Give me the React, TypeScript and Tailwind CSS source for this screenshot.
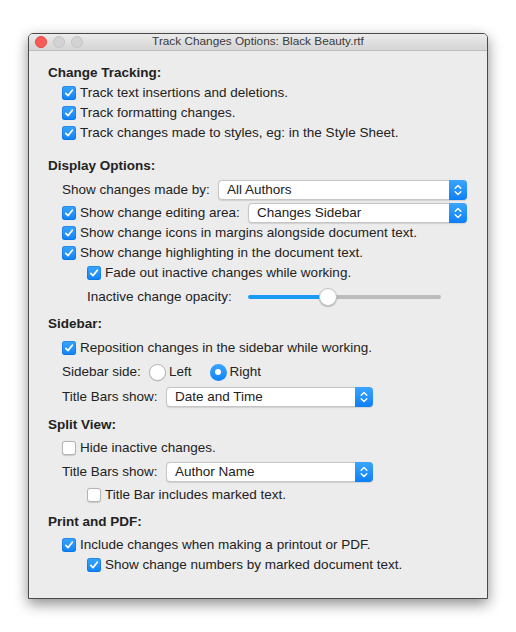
import React from "react";

const FONT = { fontFamily: '"Liberation Sans", Arial, sans-serif' };

function Check({ on }: { on: boolean }) {
  if (on) {
    return (
      <span className="flex h-[14px] w-[14px] shrink-0 items-center justify-center rounded-[3px] bg-gradient-to-b from-[#3aa5fb] to-[#0d82f8] shadow-[inset_0_0_0_1px_rgba(0,90,200,0.35)]">
        <svg width="10" height="10" viewBox="0 0 10 10">
          <path d="M1.8 5.3 L4 7.6 L8.3 2.2" fill="none" stroke="white" strokeWidth="1.7" strokeLinecap="round" strokeLinejoin="round" />
        </svg>
      </span>
    );
  }
  return <span className="h-[14px] w-[14px] shrink-0 rounded-[3px] border border-[#b4b4b4] bg-white shadow-[0_0.5px_1px_rgba(0,0,0,0.15)]" />;
}

function CheckRow({ on, text, indent = 0 }: { on: boolean; text: string; indent?: number }) {
  return (
    <div className={`flex h-[20px] items-center gap-[4px] ${indent ? "pl-[39px]" : "pl-[14px]"}`}>
      <Check on={on} />
      <span>{text}</span>
    </div>
  );
}

function Popup({ text, width }: { text: string; width: string }) {
  return (
    <div className={`flex h-[20px] items-stretch rounded-[4px] border border-[#c6c6c6] bg-white shadow-[0_0.5px_1px_rgba(0,0,0,0.12)] ${width}`}>
      <span className="flex flex-1 items-center pl-[8px]">{text}</span>
      <span className="-my-px -mr-px flex w-[18px] items-center justify-center rounded-r-[4px] bg-gradient-to-b from-[#3aa5fb] to-[#0a7ff6]">
        <svg width="8" height="12" viewBox="0 0 8 12">
          <path d="M1.2 4.3 L4 1.6 L6.8 4.3 M1.2 7.7 L4 10.4 L6.8 7.7" fill="none" stroke="white" strokeWidth="1.4" strokeLinecap="round" strokeLinejoin="round" />
        </svg>
      </span>
    </div>
  );
}

function Heading({ text, mt }: { text: string; mt: string }) {
  return <div className={`flex h-[20px] items-center font-bold ${mt}`}>{text}</div>;
}

function Radio({ on }: { on: boolean }) {
  if (on) {
    return (
      <span className="flex h-[17px] w-[17px] items-center justify-center rounded-full bg-gradient-to-b from-[#3aa5fb] to-[#0d82f8]">
        <span className="h-[6px] w-[6px] rounded-full bg-white" />
      </span>
    );
  }
  return <span className="h-[17px] w-[17px] rounded-full border border-[#b4b4b4] bg-white shadow-[0_0.5px_1px_rgba(0,0,0,0.15)]" />;
}

export default function App() {
  return (
    <div className="min-h-[632px] bg-white pl-[28px] pt-[33px] text-[13.5px] text-[#222]" style={FONT}>
      <div className="flex h-[566px] w-[460px] flex-col overflow-hidden rounded-t-[5px] border border-[#4a4a4a] bg-[#ececec] shadow-[0_5px_14px_rgba(0,0,0,0.45)]">
        {/* title bar */}
        <div className="relative flex h-[17px] shrink-0 items-center justify-center border-b border-[#bdbdbd] bg-gradient-to-b from-[#ebebeb] to-[#d5d5d5]">
          <div className="absolute left-[6px] top-[2px] flex gap-[6px]">
            <span className="h-[12px] w-[12px] rounded-full border border-[#e2463f] bg-[#fc5b57]" />
            <span className="h-[12px] w-[12px] rounded-full border border-[#c4c4c4] bg-[#d3d3d3]" />
            <span className="h-[12px] w-[12px] rounded-full border border-[#c4c4c4] bg-[#d3d3d3]" />
          </div>
          <span className="text-[11.8px] text-[#3a3a3a]">Track Changes Options: Black Beauty.rtf</span>
        </div>

        <div className="flex flex-col pl-[19px] pt-[12px]">
          <Heading text="Change Tracking:" mt="" />
          <CheckRow on text="Track text insertions and deletions." />
          <CheckRow on text="Track formatting changes." />
          <CheckRow on text="Track changes made to styles, eg: in the Style Sheet." />

          <Heading text="Display Options:" mt="mt-[13px]" />
          <div className="mt-[4px] flex h-[20px] items-center pl-[14px]">
            <span className="w-[156px]">Show changes made by:</span>
            <Popup text="All Authors" width="w-[249px]" />
          </div>
          <div className="mt-[3px] flex h-[20px] items-center pl-[14px]">
            <div className="flex w-[186px] items-center gap-[4px]">
              <Check on />
              <span>Show change editing area:</span>
            </div>
            <Popup text="Changes Sidebar" width="w-[219px]" />
          </div>
          <CheckRow on text="Show change icons in margins alongside document text." />
          <CheckRow on text="Show change highlighting in the document text." />
          <CheckRow on indent={1} text="Fade out inactive changes while working." />
          <div className="mt-[4px] flex h-[20px] items-center pl-[39px]">
            <span className="w-[161px]">Inactive change opacity:</span>
            <div className="relative flex h-[20px] w-[193px] items-center">
              <div className="h-[4px] w-[80px] rounded-l-full bg-[#1b9bf5]" />
              <div className="h-[4px] flex-1 rounded-r-full bg-[#bcbcbc]" />
              <span className="absolute left-[71px] top-[1px] h-[18px] w-[18px] rounded-full border border-[#c2c2c2] bg-white shadow-[0_1px_1.5px_rgba(0,0,0,0.25)]" />
            </div>
          </div>

          <Heading text="Sidebar:" mt="mt-[7px]" />
          <div className="mt-[4px]">
            <CheckRow on text="Reposition changes in the sidebar while working." />
          </div>
          <div className="mt-[4px] flex h-[20px] items-center pl-[14px]">
            <span className="w-[87px]">Sidebar side:</span>
            <div className="flex items-center gap-[3px]">
              <Radio on={false} />
              <span>Left</span>
            </div>
            <div className="ml-[18px] flex items-center gap-[3px]">
              <Radio on />
              <span>Right</span>
            </div>
          </div>
          <div className="mt-[5px] flex h-[20px] items-center pl-[14px]">
            <span className="w-[104px]">Title Bars show:</span>
            <Popup text="Date and Time" width="w-[207px]" />
          </div>

          <Heading text="Split View:" mt="mt-[8px]" />
          <div className="mt-[3px]">
            <CheckRow on={false} text="Hide inactive changes." />
          </div>
          <div className="mt-[4px] flex h-[20px] items-center pl-[14px]">
            <span className="w-[104px]">Title Bars show:</span>
            <Popup text="Author Name" width="w-[207px]" />
          </div>
          <div className="mt-[3px]">
            <CheckRow on={false} indent={1} text="Title Bar includes marked text." />
          </div>

          <Heading text="Print and PDF:" mt="mt-[7px]" />
          <div className="mt-[3px]">
            <CheckRow on text="Include changes when making a printout or PDF." />
          </div>
          <CheckRow on indent={1} text="Show change numbers by marked document text." />
        </div>
      </div>
    </div>
  );
}
